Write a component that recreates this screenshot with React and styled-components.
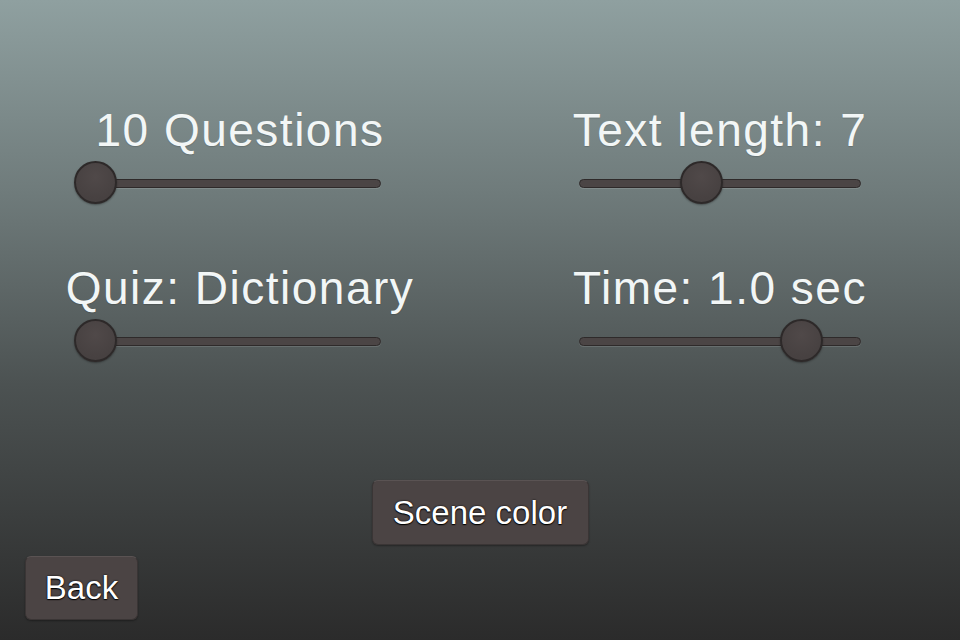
import React from 'react';
import styled, { createGlobalStyle } from 'styled-components';

const GlobalStyle = createGlobalStyle`
  html, body {
    margin: 0;
    padding: 0;
    background: #2a2a2a;
  }
  * {
    box-sizing: border-box;
  }
`;

const Screen = styled.div`
  width: 960px;
  height: 640px;
  overflow: hidden;
  display: flex;
  flex-direction: column;
  padding-top: 105px;
  background: linear-gradient(180deg, #8fa0a0 0%, #6f7b7b 30%, #4c5252 60%, #2b2b2b 100%);
  font-family: "Liberation Sans", Arial, sans-serif;
`;

const SettingsGrid = styled.div`
  display: grid;
  grid-template-columns: 360px 360px;
  column-gap: 120px;
  row-gap: 58px;
  padding-left: 60px;
`;

const Setting = styled.div`
  display: flex;
  flex-direction: column;
`;

const Label = styled.div`
  height: 50px;
  line-height: 50px;
  text-align: center;
  font-size: 46px;
  letter-spacing: 1.5px;
  color: #f2f6f6;
  white-space: nowrap;
  text-shadow: 0 1px 1px rgba(0, 0, 0, 0.15);
`;

const SliderBox = styled.div`
  position: relative;
  height: 44px;
  margin-top: 6px;
  margin-left: ${(p) => p.$offset}px;
  width: ${(p) => p.$width}px;
  display: flex;
  align-items: center;
`;

const Track = styled.div`
  width: 100%;
  height: 9px;
  border-radius: 5px;
  background: #4b4545;
  border: 1px solid #2e2a2a;
  box-shadow: 0 1px 0 rgba(255, 255, 255, 0.12);
`;

const Thumb = styled.div`
  position: absolute;
  top: 0;
  width: 43px;
  height: 43px;
  margin-left: -21px;
  border-radius: 50%;
  background: radial-gradient(circle at 50% 35%, #504949 0%, #474141 70%);
  border: 2px solid #2d2929;
  box-shadow: 0 1px 2px rgba(0, 0, 0, 0.35);
`;

const SceneRow = styled.div`
  display: flex;
  justify-content: center;
  margin-top: 117px;
`;

const Footer = styled.div`
  display: flex;
  margin-top: 11px;
  padding-left: 25px;
`;

const Button = styled.button`
  width: ${(p) => p.$width}px;
  height: ${(p) => p.$height}px;
  display: flex;
  align-items: center;
  justify-content: center;
  padding: 0;
  border-radius: 6px;
  border: 1px solid #3a3535;
  border-top-color: #5a5353;
  background: #4b4444;
  box-shadow: 0 1px 2px rgba(0, 0, 0, 0.35);
  color: #ffffff;
  font-family: "Liberation Sans", Arial, sans-serif;
  font-size: 33px;
  text-shadow: 0 1px 1px #000, 0 0 2px #000;
  cursor: pointer;
`;

const Slider = ({ width, offset, value }) => (
  <SliderBox $width={width} $offset={offset}>
    <Track />
    <Thumb style={{ left: 17 + value * (width - 34) }} />
  </SliderBox>
);

const settings = [
  { label: '10 Questions', width: 303, offset: 18, value: 0 },
  { label: 'Text length: 7', width: 282, offset: 39, value: 0.423 },
  { label: 'Quiz: Dictionary', width: 303, offset: 18, value: 0 },
  { label: 'Time: 1.0 sec', width: 282, offset: 39, value: 0.827 },
];

export default function App() {
  return (
    <>
      <GlobalStyle />
      <Screen>
        <SettingsGrid>
          {settings.map((s) => (
            <Setting key={s.label}>
              <Label>{s.label}</Label>
              <Slider width={s.width} offset={s.offset} value={s.value} />
            </Setting>
          ))}
        </SettingsGrid>
        <SceneRow>
          <Button $width={217} $height={65}>Scene color</Button>
        </SceneRow>
        <Footer>
          <Button $width={113} $height={64}>Back</Button>
        </Footer>
      </Screen>
    </>
  );
}
